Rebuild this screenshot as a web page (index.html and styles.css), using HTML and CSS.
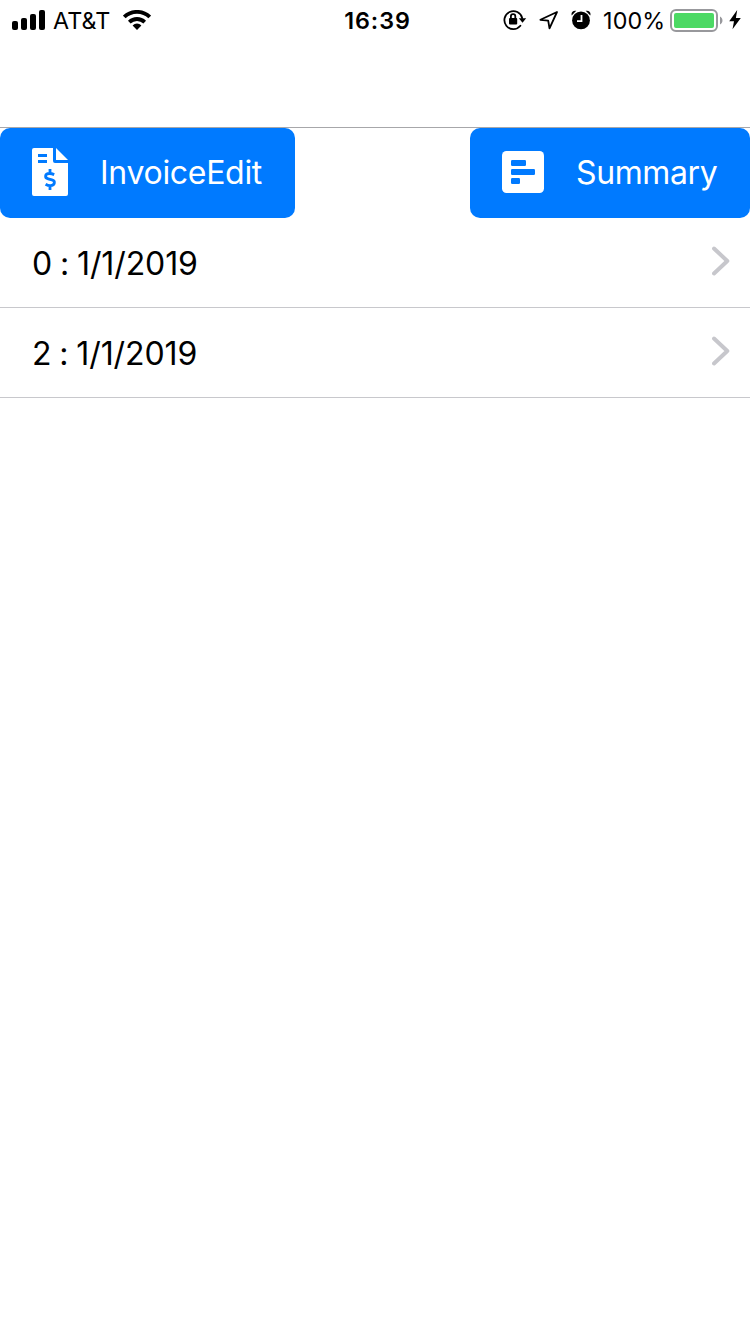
FILE: index.html
```html
<!DOCTYPE html>
<html lang="en">
<head>
<meta charset="utf-8">
<title>Invoices</title>
<link rel="stylesheet" href="styles.css">
</head>
<body>
<header class="status">
  <div class="side left">
    <svg class="signal" width="33" height="20" viewBox="0 0 33 20"><rect y="11" width="6" height="9" rx="2"/><rect x="9" y="8" width="6" height="12" rx="2"/><rect x="18" y="4" width="6" height="16" rx="2"/><rect x="27" width="6" height="20" rx="2"/></svg>
    <span class="carrier">AT&amp;T</span>
    <svg class="wifi" width="28" height="20" viewBox="0 0 28 20"><path d="M14 20l-4.4-4.6a6.3 6.3 0 0 1 8.8 0z"/><path class="line" d="M6.3 12.1a11.1 11.1 0 0 1 15.4 0M1.3 7a18.2 18.2 0 0 1 25.4 0"/></svg>
  </div>
  <time class="clock">16:39</time>
  <div class="side right">
    <svg class="lock" width="24" height="22" viewBox="0 0 24 22"><path class="line" d="M17.4 16.8A9 9 0 1 1 19.2 9.2"/><path d="M15.8 9.2H23.2L19.5 13.8z"/><rect x="6" y="9" width="8.2" height="6.5" rx="1"/><path class="line" d="M7.9 9.5V7.3a2.2 2.2 0 0 1 4.4 0v2.2"/></svg>
    <svg class="location" width="20" height="20" viewBox="0 0 20 20"><path class="line" d="M18 2L1.4 9.8L9.2 10.7L10.5 18.3z"/></svg>
    <svg class="alarm" width="20" height="20" viewBox="0 0 20 20"><circle cx="10" cy="10.4" r="8.9"/><path d="M.7 5.4C-.2 2.2 2 .1 5.3.8zM19.3 5.4C20.2 2.2 18 .1 14.7.8z"/><path class="hands" d="M10.5 5V11.2H6"/></svg>
    <span class="percent">100%</span>
    <svg class="battery" width="53" height="24" viewBox="0 0 53 24"><rect class="case" x="1" y="1" width="46" height="21" rx="5"/><rect class="charge" x="4" y="4" width="40" height="15" rx="2"/><path class="tip" d="M50 7.5c3.3 1.5 3.3 6.5 0 8z"/></svg>
    <svg class="bolt" width="12" height="20" viewBox="0 0 12 20"><path d="M8.2 0L.2 11.3H5L3.5 19.3L11.8 8.1H6.9z"/></svg>
  </div>
</header>
<nav class="toolbar">
  <button class="button invoice">
    <svg class="icon-invoice" width="36" height="48" viewBox="0 0 36 48"><path fill-rule="evenodd" d="M2 0H21V13a2 2 0 0 0 2 2H36V46a2 2 0 0 1-2 2H2a2 2 0 0 1-2-2V2a2 2 0 0 1 2-2zM6 6V9H15V6zM6 12V15H15V12z"/><path d="M24 0L36 12H24z"/><path class="dollar" d="M18 21v4M18 38v4M22.2 26.6c-2.1-.9-3.5-1.2-4.8-1.1-4.7.2-5 4.4-1.2 5.4l3.7 1c3.9 1.1 3 5.5-1.4 5.8-1.8.1-3.5-.6-4.9-1.5"/></svg>
    <span>InvoiceEdit</span>
  </button>
  <button class="button summary">
    <svg class="icon-summary" width="42" height="42" viewBox="0 0 42 42"><rect width="42" height="42" rx="4.5"/><g class="bars"><rect x="9" y="9" width="15" height="6" rx="1.2"/><rect x="9" y="18" width="24" height="6" rx="1.2"/><rect x="9" y="27" width="9" height="6" rx="1.2"/></g></svg>
    <span>Summary</span>
  </button>
</nav>
<main class="list">
  <div class="row"><span class="label">0 : 1/1/2019</span><svg class="chevron" width="18" height="30" viewBox="0 0 18 30"><path d="M2 2.5L15.3 15L2 27.5"/></svg></div>
  <div class="row"><span class="label">2 : 1/1/2019</span><svg class="chevron" width="18" height="30" viewBox="0 0 18 30"><path d="M2 2.5L15.3 15L2 27.5"/></svg></div>
</main>
</body>
</html>
```

FILE: styles.css
```css
* { box-sizing: border-box; }
body { margin: 0; min-height: 1334px; background: #fff; color: #000; font-family: Inter, sans-serif; }
svg { display: block; flex: none; }
.status { display: grid; grid-template-columns: 1fr auto 1fr; align-items: start; height: 128px; border-bottom: 1px solid #a7a7aa; font-size: 23.3px; line-height: 40px; white-space: nowrap; }
.side { display: flex; align-items: center; height: 40px; }
.left { padding-left: 12px; }
.right { justify-content: flex-end; padding-right: 9px; }
.carrier { width: 58px; margin-left: 8px; margin-right: 12px; padding-top: 2px; letter-spacing: .1px; }
.clock { font-weight: 600; letter-spacing: .9px; padding: 1px 0 0 5px; }
.line { fill: none; stroke: #000; stroke-width: 1.8; stroke-linecap: round; stroke-linejoin: round; }
.wifi .line { stroke-width: 3.8; stroke-linecap: butt; }
.lock, .location, .alarm { margin-right: 12px; }
.lock { margin-left: 1px; }
.hands { fill: none; stroke: #fff; stroke-width: 1.8; }
.percent { width: 61px; margin-right: 6px; padding-top: 2px; letter-spacing: .15px; }
.battery { margin: 1px 6px 0 0; }
.case { fill: #fff; stroke: #98989c; stroke-width: 2; }
.charge { fill: #4cd964; }
.tip { fill: #98989c; }
.toolbar { display: flex; justify-content: space-between; height: 90px; }
.button { display: flex; align-items: center; border: 0; padding: 0 32px; background: #007aff; border-radius: 10px; color: #fff; font: 400 32px/90px Inter, sans-serif; white-space: nowrap; }
.button svg { fill: #fff; margin-right: 32px; margin-top: -2px; }
.invoice { width: 295px; letter-spacing: -.3px; }
.summary { width: 280px; letter-spacing: -.4px; }
.dollar { fill: none; stroke: #007aff; stroke-width: 2.8; }
.bars { fill: #007aff; }
.row { display: flex; align-items: center; justify-content: space-between; height: 90px; padding: 0 20px 0 32px; border-bottom: 1px solid #c8c8cc; font-size: 32px; line-height: 89px; }
.label { padding-top: 2px; letter-spacing: -.1px; word-spacing: -1px; font-feature-settings: "calt" 0; }
.chevron { margin-top: -4px; fill: none; stroke: #c7c7cc; stroke-width: 4; stroke-linecap: round; stroke-linejoin: round; }
```
